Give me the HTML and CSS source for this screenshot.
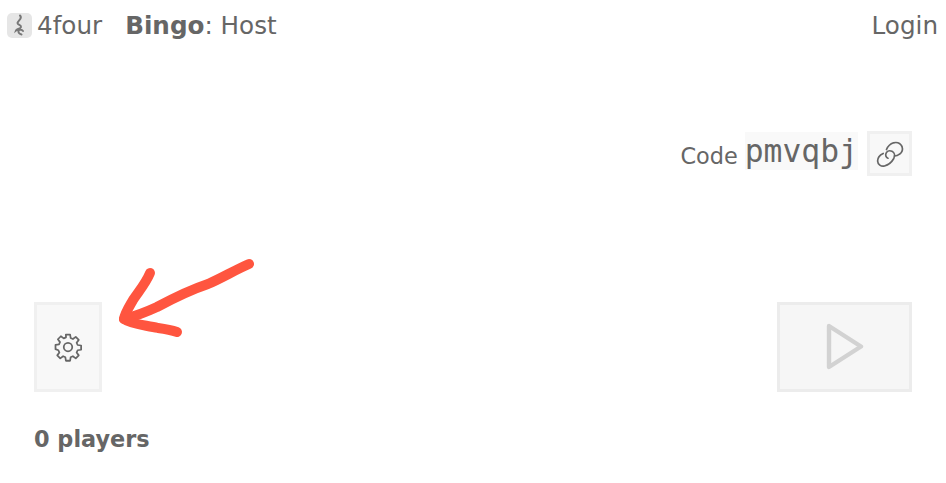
FILE: index.html
```html
<!DOCTYPE html>
<html lang="en">
<head>
<meta charset="UTF-8" />
<meta name="viewport" content="width=device-width, initial-scale=1" />
<title>Bingo: Host</title>
<link rel="stylesheet" href="styles.css">
</head>
<body>

  <!-- Top bar -->
  <header class="topbar">
    <div class="brand">
      <span class="logo">
        <svg width="25" height="25" viewBox="0 0 25 25" fill="none">
          <path d="M13 2.5 C16 5.5 11 7.5 10.5 10 C10.5 12 14.5 12 14 14 C13.5 16 9.5 16 9 17.5 C11 16 14.5 16 16 18 M12 17 C10.5 19 12 21 14.5 21.5" stroke="#777" stroke-width="2" stroke-linecap="round"/>
        </svg>
      </span>
      <span class="brand-name">4four</span>
      <span class="page-name"><b>Bingo</b>: Host</span>
    </div>
    <a class="login">Login</a>
  </header>

  <!-- Join code -->
  <section class="code-row">
    <span class="code-label">Code</span>
    <code class="code-value">pmvqbj</code>
    <button class="btn btn-link" aria-label="Copy link">
      <svg width="30" height="30" viewBox="0 0 30 30" fill="none" stroke="#666" stroke-width="1.7" stroke-linecap="round">
        <path d="M11.5 10.5 C13 7 15.5 4.8 18.5 3.8 C22 3 25.5 4.5 27 7.5 C28 10.5 27 13.5 24.5 15.2 C22.8 16.6 21 17 19.5 17"/>
        <path d="M8.2 14.5 C5 16 2.6 19 2.6 22 C2.8 25.5 6 27.8 9.5 27 C13 26 16.8 23 18.8 19.5 C20.2 16.5 19.5 13.5 17 12.3 C15 11.4 12.6 12 11.4 13.6 C10 15.8 10.8 18.5 13 19.2"/>
      </svg>
    </button>
  </section>

  <!-- Controls -->
  <section class="controls">
    <button class="btn btn-settings" aria-label="Settings">
      <svg width="30" height="30" viewBox="0 0 24 24" fill="none" stroke="#666" stroke-width="1.4" stroke-linejoin="round">
        <circle cx="12" cy="12" r="3.4"/>
        <path d="M10.3 2h3.4l.4 2.8 1.8.8 2.3-1.7 2.4 2.4-1.7 2.3.8 1.8 2.8.4v3.4l-2.8.4-.8 1.8 1.7 2.3-2.4 2.4-2.3-1.7-1.8.8-.4 2.8h-3.4l-.4-2.8-1.8-.8-2.3 1.7-2.4-2.4 1.7-2.3-.8-1.8L2 13.7v-3.4l2.8-.4.8-1.8-1.7-2.3 2.4-2.4 2.3 1.7 1.8-.8z"/>
      </svg>
    </button>
    <button class="btn btn-play" aria-label="Start" disabled>
      <svg width="38" height="48" viewBox="0 0 38 48" fill="none" stroke="#d2d2d2" stroke-width="4.4" stroke-linejoin="round">
        <path d="M3 3 L35 23.5 L3 44 Z"/>
      </svg>
    </button>
  </section>

  <p class="players">0 players</p>

  <!-- Hand drawn arrow on top of the screenshot -->
  <svg class="arrow" width="946" height="483" viewBox="0 0 946 483" fill="none" stroke="#ff553f" stroke-linecap="round" stroke-linejoin="round">
    <path stroke-width="10" d="M249 264 C235 270 222 278 208 284 C190 290 172 299 157 307 C144 313 132 317 124 319"/>
    <path stroke-width="10" d="M150 273 C146 283 139 291 133 300 C129 307 125 313 124 319 C130 324 145 325 158 328 C165 329 171 330 177 332"/>
  </svg>

</body>
</html>
```

FILE: styles.css
```css
/* Reset and base */
* {
  box-sizing: border-box;
}
body {
  margin: 0;
  font-family: "DejaVu Sans", sans-serif;
  color: #666;
  background: #fff;
  position: relative;
  height: 483px;
  overflow: hidden;
}

/* Top bar */
.topbar {
  display: flex;
  justify-content: space-between;
  align-items: center;
  height: 50px;
  padding: 0 8px 0 7px;
  font-size: 24.64px;
}
.brand {
  display: flex;
  align-items: center;
}
.logo {
  display: block;
  width: 25px;
  height: 25px;
  background: #e6e6e6;
  border-radius: 5px;
}
.logo svg {
  display: block;
}
.brand-name {
  margin-left: 5px;
}
.page-name {
  margin-left: 23px;
}

/* Buttons */
.btn {
  display: flex;
  justify-content: center;
  align-items: center;
  padding: 0;
  background: #f8f8f8;
  border: 3px solid #f0f0f0;
}

/* Join code */
.code-row {
  display: flex;
  justify-content: flex-end;
  align-items: center;
  height: 45px;
  margin-top: 81px;
  padding-right: 34px;
}
.code-label {
  font-size: 22.4px;
  margin-top: 4px;
}
.code-value {
  font-family: "DejaVu Sans Mono", monospace;
  font-size: 31.36px;
  line-height: 38px;
  margin: 0 9px 5px 7px;
  background: #f9f9f9;
}
.btn-link {
  width: 45px;
  height: 45px;
}

/* Settings and play */
.controls {
  display: flex;
  justify-content: space-between;
  margin-top: 126px;
  padding: 0 34px;
}
.btn-settings {
  width: 68px;
  height: 90px;
}
.btn-play {
  width: 135px;
  height: 90px;
  background: #f6f6f6;
  border-color: #ececec;
}

.players {
  margin: 34px 0 0 34px;
  font-size: 22.4px;
  font-weight: 700;
}

.arrow {
  position: absolute;
  top: 0;
  left: 0;
  pointer-events: none;
}
```
